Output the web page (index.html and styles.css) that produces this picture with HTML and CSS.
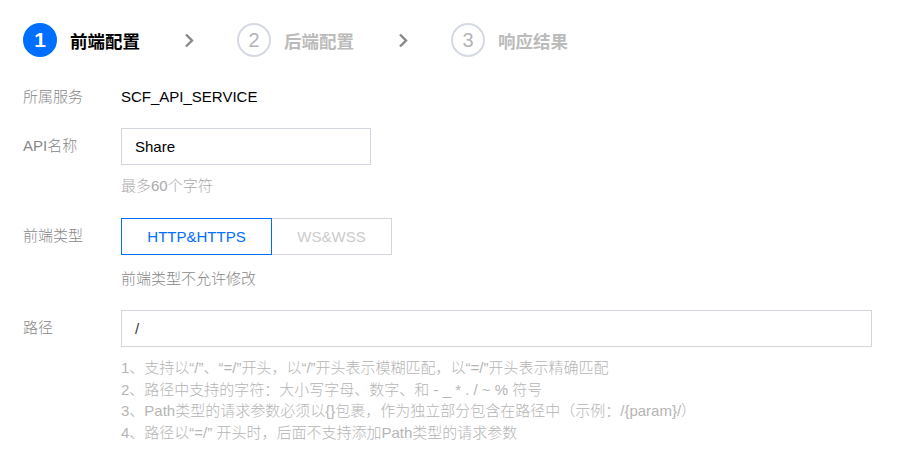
FILE: index.html
```html
<!DOCTYPE html>
<html lang="zh-CN">
<head>
<meta charset="utf-8">
<title>前端配置</title>
<link rel="stylesheet" href="styles.css">
</head>
<body>
<div class="page">
  <div class="steps">
    <div class="step active">
      <span class="num">1</span>
      <span class="title">前端配置</span>
    </div>
    <svg class="chev" width="10" height="15" viewBox="0 0 10 15"><path d="M2 1.5 L8 7.5 L2 13.5" fill="none" stroke="#888" stroke-width="2.4"/></svg>
    <div class="step">
      <span class="num">2</span>
      <span class="title">后端配置</span>
    </div>
    <svg class="chev" width="10" height="15" viewBox="0 0 10 15"><path d="M2 1.5 L8 7.5 L2 13.5" fill="none" stroke="#888" stroke-width="2.4"/></svg>
    <div class="step">
      <span class="num">3</span>
      <span class="title">响应结果</span>
    </div>
  </div>

  <div class="form">
    <div class="row r1">
      <div class="label">所属服务</div>
      <div class="field"><div class="value">SCF_API_SERVICE</div></div>
    </div>
    <div class="row r2">
      <div class="label tall">API名称</div>
      <div class="field">
        <div class="input w250">Share</div>
        <div class="hint">最多60个字符</div>
      </div>
    </div>
    <div class="row r3">
      <div class="label tall">前端类型</div>
      <div class="field">
        <div class="seg">
          <div class="seg-btn on">HTTP&amp;HTTPS</div>
          <div class="seg-btn off">WS&amp;WSS</div>
        </div>
        <div class="hint dark">前端类型不允许修改</div>
      </div>
    </div>
    <div class="row r4">
      <div class="label tall">路径</div>
      <div class="field">
        <div class="input w750">/</div>
        <div class="tips">
          <div>1、支持以“/”、“=/”开头，以“/”开头表示模糊匹配，以“=/”开头表示精确匹配</div>
          <div>2、路径中支持的字符：大小写字母、数字、和 - _ * . / ~ % 符号</div>
          <div>3、Path类型的请求参数必须以{}包裹，作为独立部分包含在路径中（示例：/{param}/）</div>
          <div>4、路径以“=/” 开头时，后面不支持添加Path类型的请求参数</div>
        </div>
      </div>
    </div>
  </div>
</div>
</body>
</html>
```

FILE: styles.css
```css
* { box-sizing: border-box; }
html, body { margin: 0; padding: 0; background: #fff; }
body {
  font-family: "Liberation Sans", Arial, "Noto Sans CJK SC", sans-serif;
  font-size: 15px;
  font-weight: 300;
  color: #000;
}
.page { padding: 23px 0 0 23px; }

.steps { display: flex; align-items: center; height: 34px; }
.step { display: flex; align-items: center; }
.num {
  width: 34px; height: 34px; border-radius: 50%;
  border: 2px solid #d5d9e2;
  display: flex; align-items: center; justify-content: center;
  font-size: 20px; font-weight: 400; color: #b5b5b5;
}
.step.active .num { background: #006eff; border-color: #006eff; color: #fff; font-weight: bold; font-size: 21px; }
.title {
  margin-left: 13px;
  font-size: 17.5px; font-weight: bold; color: #bbb;
}
.step.active .title { color: #000; }
.chev { margin: 0 43px 0 44px; }

.form { margin-top: 30px; }
.row { display: flex; }
.label { width: 98px; color: #888; line-height: 20px; flex: none; }
.label.tall { line-height: 36px; }
.field { display: flex; flex-direction: column; align-items: flex-start; }
.value { line-height: 20px; color: #000; }
.r1 { margin-bottom: 21px; }
.r2 { margin-bottom: 22px; }
.r3 { margin-bottom: 21px; }

.input {
  height: 37px; border: 1px solid #d0d5de;
  padding: 0 13px; line-height: 35px; color: #000;
}
.w250 { width: 250px; }
.w750 { width: 751px; color: #333; }
.hint { margin-top: 11px; line-height: 20px; color: #aaa; }
.hint.dark { margin-top: 14px; color: #888; }

.seg { display: flex; height: 37px; }
.seg-btn { display: flex; align-items: center; justify-content: center; font-size: 15px; }
.seg-btn.on { width: 151px; border: 1px solid #006eff; color: #006eff; }
.seg-btn.off { width: 120px; border: 1px solid #d0d5de; border-left: none; color: #ccc; }

.tips { margin-top: 10px; line-height: 21.7px; color: #b5b5b5; }
```
